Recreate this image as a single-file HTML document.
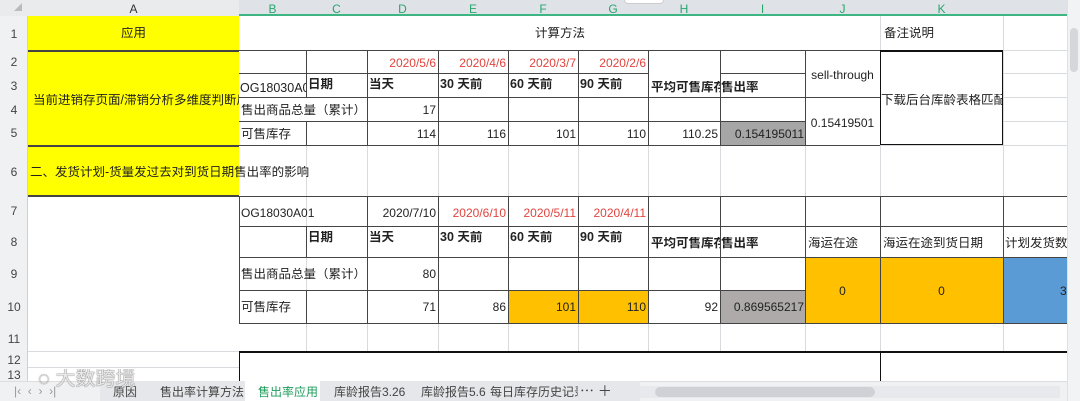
<!DOCTYPE html>
<html><head><meta charset="utf-8"><style>
*{margin:0;padding:0;box-sizing:border-box}
body{width:1080px;height:401px;overflow:hidden;background:#fff;position:relative;font-family:"Liberation Sans","Noto Sans CJK SC",sans-serif;font-size:12.5px;color:#222}
.a{position:absolute;white-space:nowrap;overflow:hidden;line-height:1.05}
.h{position:absolute;background:#d8dadd;height:1px}
.v{position:absolute;background:#d8dadd;width:1px}
.hd{position:absolute;background:#444;height:1px}
.vd{position:absolute;background:#444;width:1px}
.r{color:#e0443e}
.b{font-weight:bold}
.n{font-size:12px}
</style></head><body>
<div class="a" style="left:0;top:0;width:1067px;height:16px;background:#eaebed"></div>
<div class="a" style="left:239px;top:0;width:828px;height:16px;background:#dfe3e8"></div>
<div class="a" style="left:239px;top:14px;width:828px;height:2px;background:#3db683"></div>
<div class="a" style="left:0;top:16px;width:28px;height:365px;background:#f0f1f3;border-right:1px solid #d0d0d0"></div>
<div class="a" style="left:14px;top:3px;width:0;height:0;border-left:8px solid transparent;border-bottom:8px solid #bbb"></div>
<div class="a n" style="left:28px;top:3px;width:211px;text-align:center;color:#333">A</div>
<div class="a n" style="left:239px;top:3px;width:67px;text-align:center;color:#2aa56e">B</div>
<div class="a n" style="left:306px;top:3px;width:61px;text-align:center;color:#2aa56e">C</div>
<div class="a n" style="left:367px;top:3px;width:71px;text-align:center;color:#2aa56e">D</div>
<div class="a n" style="left:438px;top:3px;width:70px;text-align:center;color:#2aa56e">E</div>
<div class="a n" style="left:508px;top:3px;width:70px;text-align:center;color:#2aa56e">F</div>
<div class="a n" style="left:578px;top:3px;width:70px;text-align:center;color:#2aa56e">G</div>
<div class="a n" style="left:648px;top:3px;width:72px;text-align:center;color:#2aa56e">H</div>
<div class="a n" style="left:720px;top:3px;width:85px;text-align:center;color:#2aa56e">I</div>
<div class="a n" style="left:805px;top:3px;width:75px;text-align:center;color:#2aa56e">J</div>
<div class="a n" style="left:880px;top:3px;width:123px;text-align:center;color:#2aa56e">K</div>
<div class="a" style="left:624px;top:0;width:40px;height:4px;background:#fff;border:1px solid #ccc;border-top:0;border-radius:0 0 4px 4px"></div>
<div class="a n" style="left:0;top:28px;width:28px;text-align:center;color:#444">1</div>
<div class="a n" style="left:0;top:56px;width:28px;text-align:center;color:#444">2</div>
<div class="a n" style="left:0;top:80px;width:28px;text-align:center;color:#444">3</div>
<div class="a n" style="left:0;top:104px;width:28px;text-align:center;color:#444">4</div>
<div class="a n" style="left:0;top:127px;width:28px;text-align:center;color:#444">5</div>
<div class="a n" style="left:0;top:166px;width:28px;text-align:center;color:#444">6</div>
<div class="a n" style="left:0;top:205px;width:28px;text-align:center;color:#444">7</div>
<div class="a n" style="left:0;top:236px;width:28px;text-align:center;color:#444">8</div>
<div class="a n" style="left:0;top:268px;width:28px;text-align:center;color:#444">9</div>
<div class="a n" style="left:0;top:301px;width:28px;text-align:center;color:#444">10</div>
<div class="a n" style="left:0;top:333px;width:28px;text-align:center;color:#444">11</div>
<div class="a n" style="left:0;top:354px;width:28px;text-align:center;color:#444">12</div>
<div class="a n" style="left:0;top:369px;width:28px;text-align:center;color:#444">13</div>
<div class="h" style="left:239px;top:50px;width:828px"></div>
<div class="h" style="left:239px;top:145px;width:828px"></div>
<div class="h" style="left:239px;top:196px;width:828px"></div>
<div class="h" style="left:239px;top:226px;width:828px"></div>
<div class="h" style="left:239px;top:323px;width:828px"></div>
<div class="h" style="left:28px;top:351px;width:211px"></div>
<div class="h" style="left:28px;top:367px;width:211px"></div>
<div class="h" style="left:1003px;top:73px;width:64px"></div>
<div class="h" style="left:1003px;top:97px;width:64px"></div>
<div class="h" style="left:1003px;top:121px;width:64px"></div>
<div class="v" style="left:306px;top:145px;height:206px"></div>
<div class="v" style="left:367px;top:145px;height:206px"></div>
<div class="v" style="left:438px;top:145px;height:206px"></div>
<div class="v" style="left:508px;top:145px;height:206px"></div>
<div class="v" style="left:578px;top:145px;height:206px"></div>
<div class="v" style="left:648px;top:145px;height:206px"></div>
<div class="v" style="left:720px;top:145px;height:206px"></div>
<div class="v" style="left:805px;top:145px;height:206px"></div>
<div class="v" style="left:880px;top:16px;height:335px"></div>
<div class="v" style="left:1003px;top:16px;height:335px"></div>
<div class="a" style="left:28px;top:16px;width:211px;height:34px;background:#ffff00"></div>
<div class="a" style="left:28px;top:50px;width:211px;height:95px;background:#ffff00"></div>
<div class="a" style="left:28px;top:145px;width:211px;height:51px;background:#ffff00"></div>
<div class="hd" style="left:28px;top:50px;width:211px;height:2px"></div>
<div class="hd" style="left:28px;top:145px;width:211px;height:2px"></div>
<div class="hd" style="left:28px;top:195px;width:211px;height:2px"></div>
<div class="a" style="left:28px;top:27px;width:211px;text-align:center">应用</div>
<div class="a" style="left:33px;top:94px;width:206px">当前进销存页面/滞销分析多维度判断后</div>
<div class="a" style="left:30px;top:166px">二、发货计划-货量发过去对到货日期售出率的影响</div>
<div class="a" style="left:535px;top:27px">计算方法</div>
<div class="a" style="left:884px;top:27px">备注说明</div>
<div class="a" style="left:720px;top:121px;width:85px;height:24px;background:#a6a6a6"></div>
<div class="hd" style="left:239px;top:50px;width:641px"></div>
<div class="hd" style="left:239px;top:73px;width:409px"></div>
<div class="hd" style="left:720px;top:73px;width:85px"></div>
<div class="hd" style="left:239px;top:97px;width:641px"></div>
<div class="hd" style="left:239px;top:121px;width:566px"></div>
<div class="hd" style="left:239px;top:145px;width:641px"></div>
<div class="vd" style="left:306px;top:50px;height:47px"></div>
<div class="vd" style="left:306px;top:121px;height:24px"></div>
<div class="vd" style="left:367px;top:50px;height:95px"></div>
<div class="vd" style="left:438px;top:50px;height:95px"></div>
<div class="vd" style="left:508px;top:50px;height:95px"></div>
<div class="vd" style="left:578px;top:50px;height:95px"></div>
<div class="vd" style="left:648px;top:50px;height:95px"></div>
<div class="vd" style="left:720px;top:50px;height:95px"></div>
<div class="vd" style="left:805px;top:50px;height:95px"></div>
<div class="a" style="left:880px;top:50px;width:123px;height:95px;border:1px solid #111;border-top-width:2px"></div>
<div class="a r n" style="left:367px;top:57px;width:69px;text-align:right">2020/5/6</div>
<div class="a r n" style="left:438px;top:57px;width:68px;text-align:right">2020/4/6</div>
<div class="a r n" style="left:508px;top:57px;width:68px;text-align:right">2020/3/7</div>
<div class="a r n" style="left:578px;top:57px;width:68px;text-align:right">2020/2/6</div>
<div class="a" style="left:240px;top:82px;width:66px">OG18030A0</div>
<div class="a b" style="left:308px;top:78px">日期</div>
<div class="a b" style="left:369px;top:78px">当天</div>
<div class="a b" style="left:440px;top:78px">30 天前</div>
<div class="a b" style="left:510px;top:78px">60 天前</div>
<div class="a b" style="left:580px;top:78px">90 天前</div>
<div class="a b" style="left:651px;top:81px;width:69px">平均可售库存</div>
<div class="a b" style="left:721px;top:81px">售出率</div>
<div class="a n" style="left:805px;top:69px;width:75px;text-align:center">sell-through</div>
<div class="a" style="left:241px;top:104px">售出商品总量（累计）</div>
<div class="a n" style="left:367px;top:104px;width:69px;text-align:right">17</div>
<div class="a n" style="left:805px;top:117px;width:75px;text-align:center">0.15419501</div>
<div class="a" style="left:881px;top:94px;width:121px">下载后台库龄表格匹配</div>
<div class="a" style="left:241px;top:128px">可售库存</div>
<div class="a n" style="left:367px;top:128px;width:69px;text-align:right">114</div>
<div class="a n" style="left:438px;top:128px;width:68px;text-align:right">116</div>
<div class="a n" style="left:508px;top:128px;width:68px;text-align:right">101</div>
<div class="a n" style="left:578px;top:128px;width:68px;text-align:right">110</div>
<div class="a n" style="left:648px;top:128px;width:70px;text-align:right">110.25</div>
<div class="a n" style="left:720px;top:128px;width:84px;text-align:right;color:#222">0.154195011</div>
<div class="a" style="left:508px;top:290px;width:140px;height:33px;background:#ffc000"></div>
<div class="a" style="left:720px;top:290px;width:85px;height:33px;background:#aeaaaa"></div>
<div class="a" style="left:805px;top:257px;width:198px;height:66px;background:#ffc000"></div>
<div class="a" style="left:1003px;top:257px;width:64px;height:66px;background:#5b9bd5"></div>
<div class="hd" style="left:239px;top:196px;width:828px"></div>
<div class="hd" style="left:239px;top:226px;width:828px"></div>
<div class="hd" style="left:239px;top:257px;width:828px"></div>
<div class="hd" style="left:239px;top:290px;width:566px"></div>
<div class="hd" style="left:239px;top:323px;width:828px"></div>
<div class="vd" style="left:239px;top:196px;height:127px"></div>
<div class="vd" style="left:306px;top:226px;height:31px"></div>
<div class="vd" style="left:306px;top:290px;height:33px"></div>
<div class="vd" style="left:367px;top:196px;height:127px"></div>
<div class="vd" style="left:438px;top:196px;height:127px"></div>
<div class="vd" style="left:508px;top:196px;height:127px"></div>
<div class="vd" style="left:578px;top:196px;height:127px"></div>
<div class="vd" style="left:648px;top:196px;height:127px"></div>
<div class="vd" style="left:720px;top:196px;height:127px"></div>
<div class="vd" style="left:805px;top:196px;height:127px"></div>
<div class="vd" style="left:880px;top:196px;height:127px"></div>
<div class="vd" style="left:1003px;top:196px;height:127px"></div>
<div class="a n" style="left:241px;top:207px">OG18030A01</div>
<div class="a n" style="left:367px;top:207px;width:69px;text-align:right">2020/7/10</div>
<div class="a r n" style="left:438px;top:207px;width:68px;text-align:right">2020/6/10</div>
<div class="a r n" style="left:508px;top:207px;width:68px;text-align:right">2020/5/11</div>
<div class="a r n" style="left:578px;top:207px;width:68px;text-align:right">2020/4/11</div>
<div class="a b" style="left:308px;top:231px">日期</div>
<div class="a b" style="left:369px;top:231px">当天</div>
<div class="a b" style="left:440px;top:231px">30 天前</div>
<div class="a b" style="left:510px;top:231px">60 天前</div>
<div class="a b" style="left:580px;top:231px">90 天前</div>
<div class="a b" style="left:651px;top:237px;width:69px">平均可售库存</div>
<div class="a b" style="left:721px;top:237px">售出率</div>
<div class="a" style="left:808px;top:237px">海运在途</div>
<div class="a" style="left:883px;top:237px">海运在途到货日期</div>
<div class="a" style="left:1005px;top:237px;width:62px">计划发货数</div>
<div class="a" style="left:241px;top:268px">售出商品总量（累计）</div>
<div class="a n" style="left:367px;top:268px;width:69px;text-align:right">80</div>
<div class="a n" style="left:805px;top:285px;width:75px;text-align:center">0</div>
<div class="a n" style="left:880px;top:285px;width:123px;text-align:center">0</div>
<div class="a n" style="left:1060px;top:285px">3</div>
<div class="a" style="left:241px;top:301px">可售库存</div>
<div class="a n" style="left:367px;top:301px;width:69px;text-align:right">71</div>
<div class="a n" style="left:438px;top:301px;width:68px;text-align:right">86</div>
<div class="a n" style="left:508px;top:301px;width:68px;text-align:right">101</div>
<div class="a n" style="left:578px;top:301px;width:68px;text-align:right">110</div>
<div class="a n" style="left:648px;top:301px;width:70px;text-align:right">92</div>
<div class="a n" style="left:720px;top:301px;width:84px;text-align:right">0.869565217</div>
<div class="hd" style="left:239px;top:351px;width:828px;height:2px;background:#111"></div>
<div class="vd" style="left:239px;top:351px;height:30px;background:#111"></div>
<div class="vd" style="left:880px;top:351px;height:30px;background:#111"></div>
<div class="a" style="left:1067px;top:0;width:13px;height:401px;background:#f2f3f5;border-left:1px solid #e0e0e0"></div>
<div class="a" style="left:1070px;top:28px;width:8px;height:44px;background:#d5d7db;border-radius:4px"></div>
<div class="a" style="left:0;top:381px;width:1067px;height:20px;background:#f0f1f3;border-top:1px solid #ddd"></div>
<div class="a n" style="left:14px;top:385px;color:#999">|‹ &nbsp;‹ &nbsp;› &nbsp;›|</div>
<div class="a" style="left:100px;top:381px;width:540px;height:20px;background:#e6e7ea"></div>
<div class="a n" style="left:113px;top:386px;color:#444">原因</div>
<div class="a n" style="left:160px;top:386px;color:#444">售出率计算方法</div>
<div class="a" style="left:245px;top:381px;width:75px;height:20px;background:#fff"></div>
<div class="a n" style="left:258px;top:386px;color:#1f9d5c">售出率应用</div>
<div class="a n" style="left:334px;top:386px;color:#444">库龄报告3.26</div>
<div class="a n" style="left:421px;top:386px;color:#444">库龄报告5.6</div>
<div class="a n" style="left:490px;top:386px;color:#444;width:88px">每日库存历史记录</div>
<div class="a" style="left:580px;top:384px;color:#444;font-size:14px">⋯ ＋</div>
<div class="a" style="left:640px;top:386px;width:420px;height:12px;background:#e8e9ec"></div>
<div class="a" style="left:655px;top:387px;width:220px;height:10px;background:#cfd1d6;border-radius:5px"></div>
<div class="a" style="left:38px;top:369px;font-size:20px;color:rgba(255,255,255,0.85);text-shadow:0 0 1px #666,0 0 1px #666">◌ 大数跨境</div>
</body></html>
